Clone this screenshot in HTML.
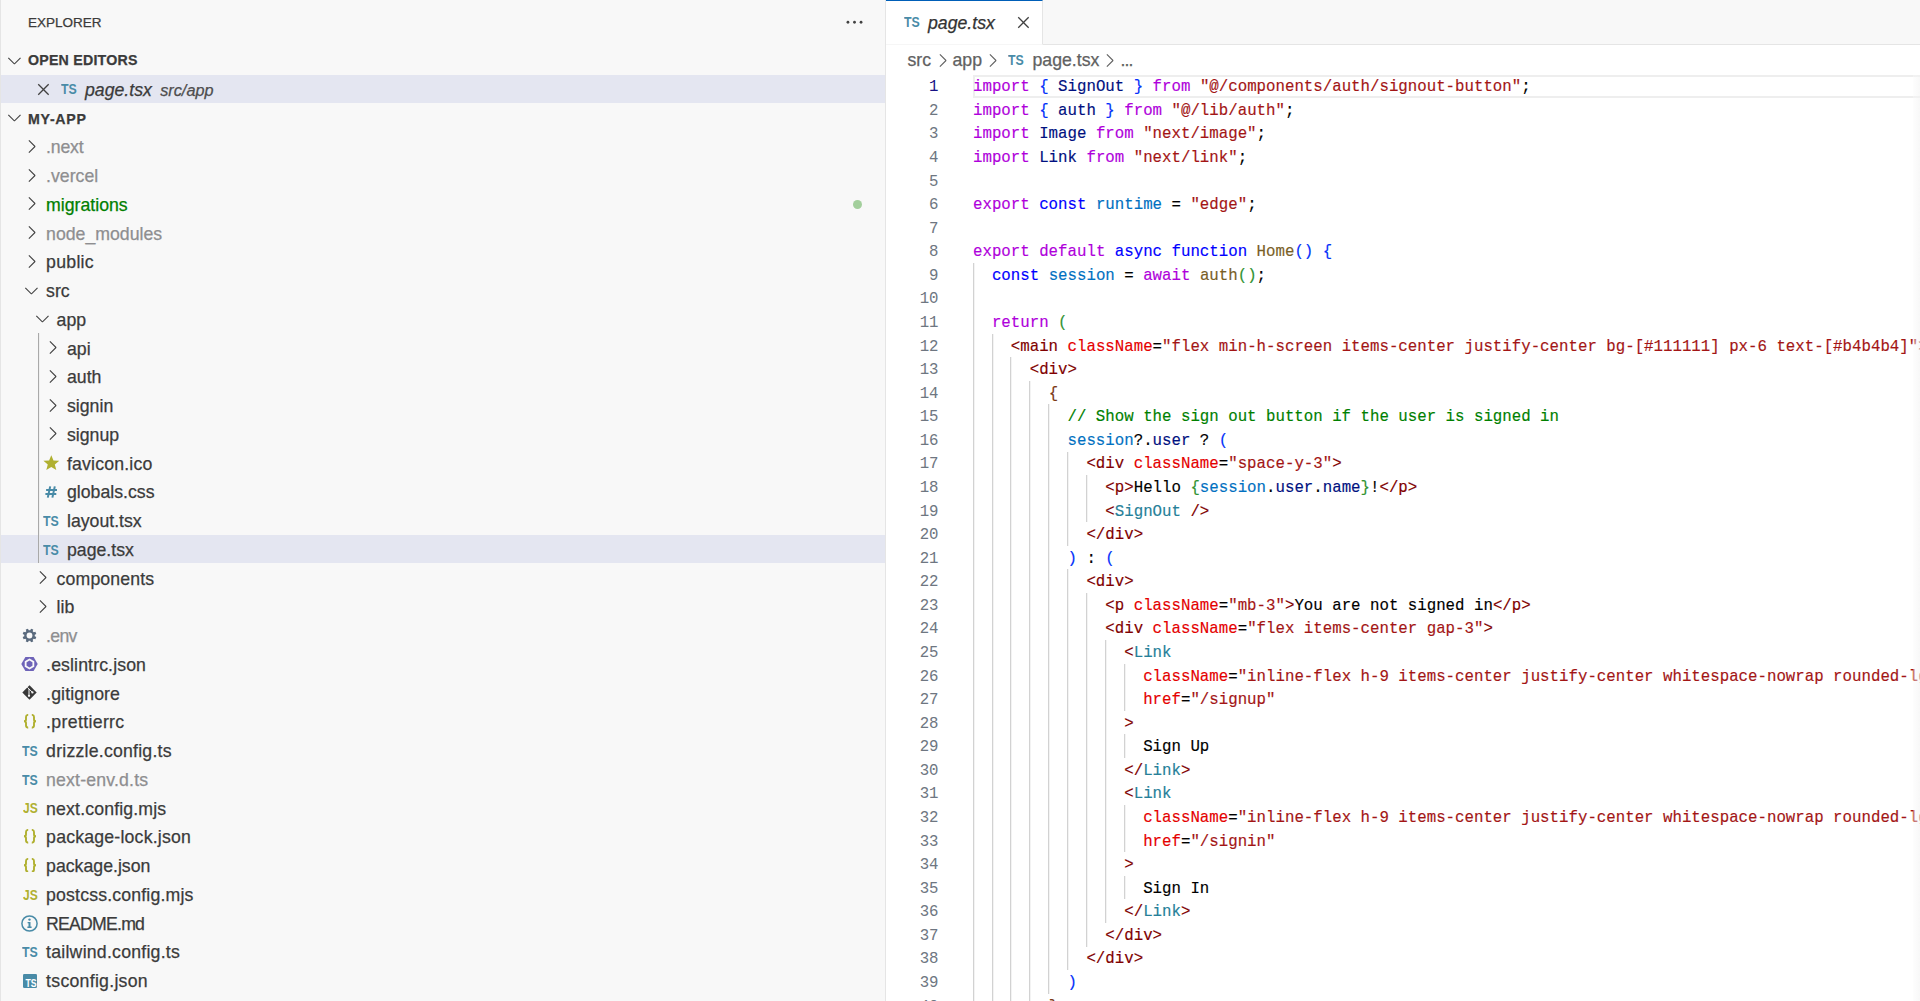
<!DOCTYPE html><html><head><meta charset="utf-8"><title>page.tsx - my-app</title><style>
*{margin:0;padding:0;box-sizing:border-box}
html,body{width:1920px;height:1001px;overflow:hidden;background:#fff}
body{position:relative;font-family:"Liberation Sans",sans-serif;color:#3b3b3b}
.ic{position:absolute;display:block}
.t{position:absolute;white-space:pre;font-size:17.7px;line-height:28.75px;height:28.75px;color:#3b3b3b;-webkit-text-stroke:0.25px currentColor}
.tsic{position:absolute;font-family:"Liberation Sans",sans-serif;font-weight:700;font-size:14px;line-height:20px;color:#498ba7;transform-origin:0 0}
.brac{position:absolute;font-family:"Liberation Sans",sans-serif;font-weight:400;font-size:15px;line-height:24px;color:#b7b73b;letter-spacing:-0.5px}
#side{position:absolute;left:0;top:0;width:886px;height:1001px;background:#f8f8f8;border-left:1px solid #e5e5e5;border-right:1px solid #e5e5e5}
.sel{position:absolute;left:1px;width:884px;height:28.75px;background:#e4e6f1}
.code{position:absolute;left:973px;margin-top:1.8px;font-family:"Liberation Mono",monospace;font-size:15.75px;line-height:23.57px;height:23.57px;white-space:pre;color:#000;-webkit-text-stroke:0.15px currentColor}
.ln{position:absolute;left:890px;margin-top:1.8px;width:48.5px;text-align:right;font-family:"Liberation Mono",monospace;font-size:15.72px;line-height:23.57px;height:23.57px;color:#6e7681;transform:scaleY(1.09);transform-origin:50% 62%}
.g{position:absolute;width:1px;background:#d2d2d2;box-shadow:0.6px 0 0 #ececec}
.k{color:#af00db}.b{color:#0000ff}.v{color:#001080}.s{color:#a31515}.c{color:#0070c1}.f{color:#795e26}
.p1{color:#0431fa}.p2{color:#319331}.p3{color:#7b3814}.tg{color:#800000}.at{color:#e50000}.cm{color:#008000}.cp{color:#267f99}
</style></head><body>
<div id="side"></div>
<div class="t" style="left:28px;top:8.5px;font-size:13.5px;color:#3b3b3b">EXPLORER</div>
<svg class="ic" style="left:843.5px;top:17.3px;width:21px;height:10.5px" viewBox="0 2.5 16 8"><circle cx="3" cy="6.5" r="1.05" fill="#424242"/><circle cx="8" cy="6.5" r="1.05" fill="#424242"/><circle cx="13" cy="6.5" r="1.05" fill="#424242"/></svg>
<svg class="ic" style="left:4.14px;top:49.64px;width:20.91px;height:20.91px" viewBox="0 0 16 16"><path fill="#424242" d="M7.976 10.072l4.357-4.357.62.618L8.284 11h-.618L3 6.333l.619-.618 4.357 4.357z"/></svg>
<div class="t" style="left:28px;top:45.75px;font-size:14.2px;font-weight:700;letter-spacing:0.22px;color:#3b3b3b">OPEN EDITORS</div>
<div class="sel" style="top:74.5px"></div>
<svg class="ic" style="left:32.74px;top:78.54px;width:20.91px;height:20.91px" viewBox="0 0 16 16"><path fill="#424242" d="M8 8.707l3.646 3.647.708-.707L8.707 8l3.647-3.646-.707-.708L8 7.293 4.354 3.646l-.707.708L7.293 8l-3.646 3.646.707.708L8 8.707z"/></svg>
<span class="tsic" style="left:61.00px;top:78.71px;transform:scaleX(0.88)">TS</span>
<div class="t" style="left:85px;top:75.8px;font-style:italic">page.tsx<span style="font-size:16.3px;color:#4e4e4e;margin-left:8.3px">src/app</span></div>
<svg class="ic" style="left:4.14px;top:107.14px;width:20.91px;height:20.91px" viewBox="0 0 16 16"><path fill="#424242" d="M7.976 10.072l4.357-4.357.62.618L8.284 11h-.618L3 6.333l.619-.618 4.357 4.357z"/></svg>
<div class="t" style="left:28px;top:105px;font-size:14.2px;font-weight:700;letter-spacing:0.7px;color:#3b3b3b">MY-APP</div>
<svg class="ic" style="left:21.14px;top:135.92px;width:20.91px;height:20.91px" viewBox="0 0 16 16"><path fill="#424242" d="M10.072 8.024L5.715 3.667l.618-.62L11 7.716v.618L6.333 13l-.618-.619 4.357-4.357z"/></svg>
<div class="t" style="left:46.10px;top:133.30px;letter-spacing:-0.22px;color:#8e8e90">.next</div>
<svg class="ic" style="left:21.14px;top:164.67px;width:20.91px;height:20.91px" viewBox="0 0 16 16"><path fill="#424242" d="M10.072 8.024L5.715 3.667l.618-.62L11 7.716v.618L6.333 13l-.618-.619 4.357-4.357z"/></svg>
<div class="t" style="left:46.10px;top:162.05px;color:#8e8e90">.vercel</div>
<svg class="ic" style="left:21.14px;top:193.42px;width:20.91px;height:20.91px" viewBox="0 0 16 16"><path fill="#424242" d="M10.072 8.024L5.715 3.667l.618-.62L11 7.716v.618L6.333 13l-.618-.619 4.357-4.357z"/></svg>
<div class="t" style="left:46.10px;top:190.80px;color:#007f00">migrations</div>
<div style="position:absolute;left:852.6px;top:199.78px;width:9.4px;height:9.4px;border-radius:50%;background:#a3cf9c"></div>
<svg class="ic" style="left:21.14px;top:222.17px;width:20.91px;height:20.91px" viewBox="0 0 16 16"><path fill="#424242" d="M10.072 8.024L5.715 3.667l.618-.62L11 7.716v.618L6.333 13l-.618-.619 4.357-4.357z"/></svg>
<div class="t" style="left:46.10px;top:219.55px;color:#8e8e90">node_modules</div>
<svg class="ic" style="left:21.14px;top:250.92px;width:20.91px;height:20.91px" viewBox="0 0 16 16"><path fill="#424242" d="M10.072 8.024L5.715 3.667l.618-.62L11 7.716v.618L6.333 13l-.618-.619 4.357-4.357z"/></svg>
<div class="t" style="left:46.10px;top:248.30px;letter-spacing:0.26px">public</div>
<svg class="ic" style="left:21.14px;top:279.67px;width:20.91px;height:20.91px" viewBox="0 0 16 16"><path fill="#424242" d="M7.976 10.072l4.357-4.357.62.618L8.284 11h-.618L3 6.333l.619-.618 4.357 4.357z"/></svg>
<div class="t" style="left:46.10px;top:277.05px">src</div>
<svg class="ic" style="left:31.59px;top:308.42px;width:20.91px;height:20.91px" viewBox="0 0 16 16"><path fill="#424242" d="M7.976 10.072l4.357-4.357.62.618L8.284 11h-.618L3 6.333l.619-.618 4.357 4.357z"/></svg>
<div class="t" style="left:56.55px;top:305.80px">app</div>
<svg class="ic" style="left:42.04px;top:337.17px;width:20.91px;height:20.91px" viewBox="0 0 16 16"><path fill="#424242" d="M10.072 8.024L5.715 3.667l.618-.62L11 7.716v.618L6.333 13l-.618-.619 4.357-4.357z"/></svg>
<div class="t" style="left:67.00px;top:334.55px">api</div>
<svg class="ic" style="left:42.04px;top:365.92px;width:20.91px;height:20.91px" viewBox="0 0 16 16"><path fill="#424242" d="M10.072 8.024L5.715 3.667l.618-.62L11 7.716v.618L6.333 13l-.618-.619 4.357-4.357z"/></svg>
<div class="t" style="left:67.00px;top:363.30px">auth</div>
<svg class="ic" style="left:42.04px;top:394.67px;width:20.91px;height:20.91px" viewBox="0 0 16 16"><path fill="#424242" d="M10.072 8.024L5.715 3.667l.618-.62L11 7.716v.618L6.333 13l-.618-.619 4.357-4.357z"/></svg>
<div class="t" style="left:67.00px;top:392.05px">signin</div>
<svg class="ic" style="left:42.04px;top:423.42px;width:20.91px;height:20.91px" viewBox="0 0 16 16"><path fill="#424242" d="M10.072 8.024L5.715 3.667l.618-.62L11 7.716v.618L6.333 13l-.618-.619 4.357-4.357z"/></svg>
<div class="t" style="left:67.00px;top:420.80px">signup</div>
<svg class="ic" style="left:42.70px;top:455.02px;width:16.6px;height:15.6px" viewBox="0 0 16 15"><path fill="#b0b030" d="M8 0.3 L10.1 5.2 L15.6 5.6 L11.4 9.1 L12.8 14.4 L8 11.5 L3.2 14.4 L4.6 9.1 L0.4 5.6 L5.9 5.2 Z"/></svg>
<div class="t" style="left:67.00px;top:449.55px;letter-spacing:0.17px">favicon.ico</div>
<svg class="ic" style="left:45.40px;top:485.77px;width:12.4px;height:12px" viewBox="0 0 12 12"><path stroke="#498ba7" stroke-width="2.0" fill="none" d="M5.0 0.4 L2.6 11.6 M9.6 0.4 L7.2 11.6 M0.9 3.9 H11.8 M0.2 8.1 H11.1"/></svg>
<div class="t" style="left:67.00px;top:478.30px">globals.css</div>
<span class="tsic" style="left:43.20px;top:510.79px;transform:scaleX(0.88)">TS</span>
<div class="t" style="left:67.00px;top:507.05px">layout.tsx</div>
<div class="sel" style="top:534.50px"></div>
<span class="tsic" style="left:43.20px;top:539.53px;transform:scaleX(0.88)">TS</span>
<div class="t" style="left:67.00px;top:535.80px">page.tsx</div>
<svg class="ic" style="left:31.59px;top:567.17px;width:20.91px;height:20.91px" viewBox="0 0 16 16"><path fill="#424242" d="M10.072 8.024L5.715 3.667l.618-.62L11 7.716v.618L6.333 13l-.618-.619 4.357-4.357z"/></svg>
<div class="t" style="left:56.55px;top:564.55px;letter-spacing:0.14px">components</div>
<svg class="ic" style="left:31.59px;top:595.92px;width:20.91px;height:20.91px" viewBox="0 0 16 16"><path fill="#424242" d="M10.072 8.024L5.715 3.667l.618-.62L11 7.716v.618L6.333 13l-.618-.619 4.357-4.357z"/></svg>
<div class="t" style="left:56.55px;top:593.30px">lib</div>
<svg class="ic" style="left:22.20px;top:628.12px;width:15px;height:15px" viewBox="0 0 15 15"><polygon points="8.28,2.26 9.02,0.67 11.26,1.60 10.65,3.24 11.76,4.35 13.40,3.74 14.33,5.98 12.74,6.72 12.74,8.28 14.33,9.02 13.40,11.26 11.76,10.65 10.65,11.76 11.26,13.40 9.02,14.33 8.28,12.74 6.72,12.74 5.98,14.33 3.74,13.40 4.35,11.76 3.24,10.65 1.60,11.26 0.67,9.02 2.26,8.28 2.26,6.72 0.67,5.98 1.60,3.74 3.24,4.35 4.35,3.24 3.74,1.60 5.98,0.67 6.72,2.26" fill="#5a6a7d"/><circle cx="7.5" cy="7.5" r="2.9" fill="#f8f8f8"/></svg>
<div class="t" style="left:46.10px;top:622.05px;letter-spacing:-0.7px;color:#8e8e90">.env</div>
<svg class="ic" style="left:21.40px;top:655.77px;width:17px;height:16px" viewBox="0 0 17 16"><polygon points="16.70,8.00 12.60,15.10 4.40,15.10 0.30,8.00 4.40,0.90 12.60,0.90" fill="#6e63b8"/><polygon points="8.50,13.50 3.74,10.75 3.74,5.25 8.50,2.50 13.26,5.25 13.26,10.75" fill="#f8f8f8"/><polygon points="8.50,11.40 5.56,9.70 5.56,6.30 8.50,4.60 11.44,6.30 11.44,9.70" fill="#6e63b8"/></svg>
<div class="t" style="left:46.10px;top:650.80px;letter-spacing:0.12px">.eslintrc.json</div>
<svg class="ic" style="left:22.40px;top:685.12px;width:15px;height:15px" viewBox="0 0 15 15"><path fill="#383838" d="M7.5 0.3 L14.7 7.5 L7.5 14.7 L0.3 7.5 Z"/><path stroke="#f8f8f8" stroke-width="1.0" fill="none" d="M5.4 2.3 L10.6 7.5 M7.0 4.0 V10.6"/><circle cx="7.0" cy="10.8" r="1.15" fill="#f8f8f8"/><circle cx="10.4" cy="7.4" r="1.15" fill="#f8f8f8"/></svg>
<div class="t" style="left:46.10px;top:679.55px;letter-spacing:0.12px">.gitignore</div>
<svg class="ic" style="left:22.80px;top:714.08px;width:14px;height:14.6px" viewBox="0 0 14 14.6"><path stroke="#b0b030" stroke-width="1.9" fill="none" d="M5.2 0.9 C3.6 0.9 3.0 1.5 3.0 3.0 V5.6 C3.0 6.7 2.4 7.3 1.0 7.3 C2.4 7.3 3.0 7.9 3.0 9.0 V11.6 C3.0 13.1 3.6 13.7 5.2 13.7"/><path stroke="#b0b030" stroke-width="1.9" fill="none" d="M8.8 0.9 C10.4 0.9 11.0 1.5 11.0 3.0 V5.6 C11.0 6.7 11.6 7.3 13.0 7.3 C11.6 7.3 11.0 7.9 11.0 9.0 V11.6 C11.0 13.1 10.4 13.7 8.8 13.7"/></svg>
<div class="t" style="left:46.10px;top:708.30px;letter-spacing:0.34px">.prettierrc</div>
<span class="tsic" style="left:22.30px;top:740.78px;transform:scaleX(0.88)">TS</span>
<div class="t" style="left:46.10px;top:737.05px;letter-spacing:0.22px">drizzle.config.ts</div>
<span class="tsic" style="left:22.30px;top:769.53px;transform:scaleX(0.88)">TS</span>
<div class="t" style="left:46.10px;top:765.80px;letter-spacing:0.17px;color:#8e8e90">next-env.d.ts</div>
<span class="tsic" style="left:22.90px;top:798.38px;color:#b0b030;transform:scaleX(0.86)">JS</span>
<div class="t" style="left:46.10px;top:794.55px;letter-spacing:0.15px">next.config.mjs</div>
<svg class="ic" style="left:22.80px;top:829.08px;width:14px;height:14.6px" viewBox="0 0 14 14.6"><path stroke="#b0b030" stroke-width="1.9" fill="none" d="M5.2 0.9 C3.6 0.9 3.0 1.5 3.0 3.0 V5.6 C3.0 6.7 2.4 7.3 1.0 7.3 C2.4 7.3 3.0 7.9 3.0 9.0 V11.6 C3.0 13.1 3.6 13.7 5.2 13.7"/><path stroke="#b0b030" stroke-width="1.9" fill="none" d="M8.8 0.9 C10.4 0.9 11.0 1.5 11.0 3.0 V5.6 C11.0 6.7 11.6 7.3 13.0 7.3 C11.6 7.3 11.0 7.9 11.0 9.0 V11.6 C11.0 13.1 10.4 13.7 8.8 13.7"/></svg>
<div class="t" style="left:46.10px;top:823.30px;letter-spacing:0.2px">package-lock.json</div>
<svg class="ic" style="left:22.80px;top:857.83px;width:14px;height:14.6px" viewBox="0 0 14 14.6"><path stroke="#b0b030" stroke-width="1.9" fill="none" d="M5.2 0.9 C3.6 0.9 3.0 1.5 3.0 3.0 V5.6 C3.0 6.7 2.4 7.3 1.0 7.3 C2.4 7.3 3.0 7.9 3.0 9.0 V11.6 C3.0 13.1 3.6 13.7 5.2 13.7"/><path stroke="#b0b030" stroke-width="1.9" fill="none" d="M8.8 0.9 C10.4 0.9 11.0 1.5 11.0 3.0 V5.6 C11.0 6.7 11.6 7.3 13.0 7.3 C11.6 7.3 11.0 7.9 11.0 9.0 V11.6 C11.0 13.1 10.4 13.7 8.8 13.7"/></svg>
<div class="t" style="left:46.10px;top:852.05px">package.json</div>
<span class="tsic" style="left:22.90px;top:884.63px;color:#b0b030;transform:scaleX(0.86)">JS</span>
<div class="t" style="left:46.10px;top:880.80px;letter-spacing:0.16px">postcss.config.mjs</div>
<svg class="ic" style="left:21.30px;top:915.12px;width:17px;height:17px" viewBox="0 0 17 17"><circle cx="8.5" cy="8.5" r="7.6" stroke="#498ba7" stroke-width="1.5" fill="none"/><circle cx="8.5" cy="4.6" r="1.2" fill="#498ba7"/><path fill="#498ba7" d="M6.6 6.9 H9.5 V11.6 H10.6 V12.9 H6.4 V11.6 H7.5 V8.2 H6.6 Z"/></svg>
<div class="t" style="left:46.10px;top:909.55px;letter-spacing:-0.79px">README.md</div>
<span class="tsic" style="left:22.30px;top:942.03px;transform:scaleX(0.88)">TS</span>
<div class="t" style="left:46.10px;top:938.30px;letter-spacing:0.23px">tailwind.config.ts</div>
<div style="position:absolute;left:22.70px;top:973.52px;width:14.3px;height:14.7px;border-radius:1.3px;background:#498ba7;overflow:hidden"><span style="position:absolute;right:0.7px;top:3.2px;font-family:'Liberation Sans';font-weight:700;font-size:10.6px;line-height:12px;color:#fff;transform:scaleX(0.82);transform-origin:100% 0">TS</span></div>
<div class="t" style="left:46.10px;top:967.05px;letter-spacing:0.27px">tsconfig.json</div>
<div class="g" style="left:38.2px;top:333.25px;height:230.00px;background:#a9a9a9"></div>
<div style="position:absolute;left:886px;top:0;width:1034px;height:45.1px;background:#f8f8f8;border-bottom:1px solid #e5e5e5"></div>
<div style="position:absolute;left:886px;top:0;width:157px;height:45.1px;background:#fff;border-top:1.5px solid #005fb8;border-right:1px solid #e5e5e5;border-bottom:1px solid #f6f6f6"></div>
<span class="tsic" style="left:904.00px;top:12.41px;transform:scaleX(0.88)">TS</span>
<div class="t" style="left:928px;top:8.5px;font-style:italic;color:#333">page.tsx</div>
<svg class="ic" style="left:1013.04px;top:12.34px;width:20.91px;height:20.91px" viewBox="0 0 16 16"><path fill="#424242" d="M8 8.707l3.646 3.647.708-.707L8.707 8l3.647-3.646-.707-.708L8 7.293 4.354 3.646l-.707.708L7.293 8l-3.646 3.646.707.708L8 8.707z"/></svg>
<div class="t" style="left:907.5px;top:46.35px;color:#616161">src</div>
<svg class="ic" style="left:931.74px;top:49.74px;width:20.91px;height:20.91px" viewBox="0 0 16 16"><path fill="#616161" d="M10.072 8.024L5.715 3.667l.618-.62L11 7.716v.618L6.333 13l-.618-.619 4.357-4.357z"/></svg>
<div class="t" style="left:952.5px;top:46.35px;color:#616161">app</div>
<svg class="ic" style="left:982.44px;top:49.74px;width:20.91px;height:20.91px" viewBox="0 0 16 16"><path fill="#616161" d="M10.072 8.024L5.715 3.667l.618-.62L11 7.716v.618L6.333 13l-.618-.619 4.357-4.357z"/></svg>
<span class="tsic" style="left:1008.00px;top:50.26px;transform:scaleX(0.88)">TS</span>
<div class="t" style="left:1032.5px;top:46.35px;color:#616161">page.tsx</div>
<svg class="ic" style="left:1099.34px;top:49.74px;width:20.91px;height:20.91px" viewBox="0 0 16 16"><path fill="#616161" d="M10.072 8.024L5.715 3.667l.618-.62L11 7.716v.618L6.333 13l-.618-.619 4.357-4.357z"/></svg>
<div class="t" style="left:1120.5px;top:46.35px;letter-spacing:-0.9px;color:#616161">...</div>
<div style="position:absolute;left:972.5px;top:74.50px;width:948px;height:23.57px;border:2px solid #eeeeee;border-right:none"></div>
<div class="g" style="left:973.00px;top:263.06px;height:737.94px"></div>
<div class="g" style="left:992.00px;top:333.77px;height:667.23px"></div>
<div class="g" style="left:1010.00px;top:357.34px;height:643.66px"></div>
<div class="g" style="left:1029.00px;top:380.91px;height:620.09px"></div>
<div class="g" style="left:1048.00px;top:404.48px;height:589.25px"></div>
<div class="g" style="left:1067.00px;top:451.62px;height:94.28px"></div>
<div class="g" style="left:1067.00px;top:569.47px;height:400.69px"></div>
<div class="g" style="left:1086.00px;top:475.19px;height:47.14px"></div>
<div class="g" style="left:1086.00px;top:593.04px;height:353.55px"></div>
<div class="g" style="left:1105.00px;top:640.18px;height:282.84px"></div>
<div class="g" style="left:1124.00px;top:663.75px;height:47.14px"></div>
<div class="g" style="left:1124.00px;top:734.46px;height:23.57px"></div>
<div class="g" style="left:1124.00px;top:805.17px;height:47.14px"></div>
<div class="g" style="left:1124.00px;top:875.88px;height:23.57px"></div>
<div class="ln" style="top:74.50px;color:#171184">1</div>
<div class="code" style="top:74.50px"><span class="k">import</span> <span class="p1">{</span> <span class="v">SignOut</span> <span class="p1">}</span> <span class="k">from</span> <span class="s">"@/components/auth/signout-button"</span>;</div>
<div class="ln" style="top:98.07px;color:#6e7681">2</div>
<div class="code" style="top:98.07px"><span class="k">import</span> <span class="p1">{</span> <span class="v">auth</span> <span class="p1">}</span> <span class="k">from</span> <span class="s">"@/lib/auth"</span>;</div>
<div class="ln" style="top:121.64px;color:#6e7681">3</div>
<div class="code" style="top:121.64px"><span class="k">import</span> <span class="v">Image</span> <span class="k">from</span> <span class="s">"next/image"</span>;</div>
<div class="ln" style="top:145.21px;color:#6e7681">4</div>
<div class="code" style="top:145.21px"><span class="k">import</span> <span class="v">Link</span> <span class="k">from</span> <span class="s">"next/link"</span>;</div>
<div class="ln" style="top:168.78px;color:#6e7681">5</div>
<div class="ln" style="top:192.35px;color:#6e7681">6</div>
<div class="code" style="top:192.35px"><span class="k">export</span> <span class="b">const</span> <span class="c">runtime</span> = <span class="s">"edge"</span>;</div>
<div class="ln" style="top:215.92px;color:#6e7681">7</div>
<div class="ln" style="top:239.49px;color:#6e7681">8</div>
<div class="code" style="top:239.49px"><span class="k">export</span> <span class="k">default</span> <span class="b">async</span> <span class="b">function</span> <span class="f">Home</span><span class="p1">()</span> <span class="p1">{</span></div>
<div class="ln" style="top:263.06px;color:#6e7681">9</div>
<div class="code" style="top:263.06px">  <span class="b">const</span> <span class="c">session</span> = <span class="k">await</span> <span class="f">auth</span><span class="p2">()</span>;</div>
<div class="ln" style="top:286.63px;color:#6e7681">10</div>
<div class="ln" style="top:310.20px;color:#6e7681">11</div>
<div class="code" style="top:310.20px">  <span class="k">return</span> <span class="p2">(</span></div>
<div class="ln" style="top:333.77px;color:#6e7681">12</div>
<div class="code" style="top:333.77px">    <span class="tg">&lt;main</span> <span class="at">className</span>=<span class="s">"flex min-h-screen items-center justify-center bg-[#111111] px-6 text-[#b4b4b4]"</span><span class="tg">&gt;</span></div>
<div class="ln" style="top:357.34px;color:#6e7681">13</div>
<div class="code" style="top:357.34px">      <span class="tg">&lt;div&gt;</span></div>
<div class="ln" style="top:380.91px;color:#6e7681">14</div>
<div class="code" style="top:380.91px">        <span class="p3">{</span></div>
<div class="ln" style="top:404.48px;color:#6e7681">15</div>
<div class="code" style="top:404.48px">          <span class="cm">// Show the sign out button if the user is signed in</span></div>
<div class="ln" style="top:428.05px;color:#6e7681">16</div>
<div class="code" style="top:428.05px">          <span class="c">session</span>?.<span class="v">user</span> ? <span class="p1">(</span></div>
<div class="ln" style="top:451.62px;color:#6e7681">17</div>
<div class="code" style="top:451.62px">            <span class="tg">&lt;div</span> <span class="at">className</span>=<span class="s">"space-y-3"</span><span class="tg">&gt;</span></div>
<div class="ln" style="top:475.19px;color:#6e7681">18</div>
<div class="code" style="top:475.19px">              <span class="tg">&lt;p&gt;</span>Hello <span class="p2">{</span><span class="c">session</span>.<span class="v">user</span>.<span class="v">name</span><span class="p2">}</span>!<span class="tg">&lt;/p&gt;</span></div>
<div class="ln" style="top:498.76px;color:#6e7681">19</div>
<div class="code" style="top:498.76px">              <span class="tg">&lt;</span><span class="cp">SignOut</span> <span class="tg">/&gt;</span></div>
<div class="ln" style="top:522.33px;color:#6e7681">20</div>
<div class="code" style="top:522.33px">            <span class="tg">&lt;/div&gt;</span></div>
<div class="ln" style="top:545.90px;color:#6e7681">21</div>
<div class="code" style="top:545.90px">          <span class="p1">)</span> : <span class="p1">(</span></div>
<div class="ln" style="top:569.47px;color:#6e7681">22</div>
<div class="code" style="top:569.47px">            <span class="tg">&lt;div&gt;</span></div>
<div class="ln" style="top:593.04px;color:#6e7681">23</div>
<div class="code" style="top:593.04px">              <span class="tg">&lt;p</span> <span class="at">className</span>=<span class="s">"mb-3"</span><span class="tg">&gt;</span>You are not signed in<span class="tg">&lt;/p&gt;</span></div>
<div class="ln" style="top:616.61px;color:#6e7681">24</div>
<div class="code" style="top:616.61px">              <span class="tg">&lt;div</span> <span class="at">className</span>=<span class="s">"flex items-center gap-3"</span><span class="tg">&gt;</span></div>
<div class="ln" style="top:640.18px;color:#6e7681">25</div>
<div class="code" style="top:640.18px">                <span class="tg">&lt;</span><span class="cp">Link</span></div>
<div class="ln" style="top:663.75px;color:#6e7681">26</div>
<div class="code" style="top:663.75px">                  <span class="at">className</span>=<span class="s">"inline-flex h-9 items-center justify-center whitespace-nowrap rounded-lg bg-neutral-800"</span></div>
<div class="ln" style="top:687.32px;color:#6e7681">27</div>
<div class="code" style="top:687.32px">                  <span class="at">href</span>=<span class="s">"/signup"</span></div>
<div class="ln" style="top:710.89px;color:#6e7681">28</div>
<div class="code" style="top:710.89px">                <span class="tg">&gt;</span></div>
<div class="ln" style="top:734.46px;color:#6e7681">29</div>
<div class="code" style="top:734.46px">                  Sign Up</div>
<div class="ln" style="top:758.03px;color:#6e7681">30</div>
<div class="code" style="top:758.03px">                <span class="tg">&lt;/</span><span class="cp">Link</span><span class="tg">&gt;</span></div>
<div class="ln" style="top:781.60px;color:#6e7681">31</div>
<div class="code" style="top:781.60px">                <span class="tg">&lt;</span><span class="cp">Link</span></div>
<div class="ln" style="top:805.17px;color:#6e7681">32</div>
<div class="code" style="top:805.17px">                  <span class="at">className</span>=<span class="s">"inline-flex h-9 items-center justify-center whitespace-nowrap rounded-lg bg-neutral-800"</span></div>
<div class="ln" style="top:828.74px;color:#6e7681">33</div>
<div class="code" style="top:828.74px">                  <span class="at">href</span>=<span class="s">"/signin"</span></div>
<div class="ln" style="top:852.31px;color:#6e7681">34</div>
<div class="code" style="top:852.31px">                <span class="tg">&gt;</span></div>
<div class="ln" style="top:875.88px;color:#6e7681">35</div>
<div class="code" style="top:875.88px">                  Sign In</div>
<div class="ln" style="top:899.45px;color:#6e7681">36</div>
<div class="code" style="top:899.45px">                <span class="tg">&lt;/</span><span class="cp">Link</span><span class="tg">&gt;</span></div>
<div class="ln" style="top:923.02px;color:#6e7681">37</div>
<div class="code" style="top:923.02px">              <span class="tg">&lt;/div&gt;</span></div>
<div class="ln" style="top:946.59px;color:#6e7681">38</div>
<div class="code" style="top:946.59px">            <span class="tg">&lt;/div&gt;</span></div>
<div class="ln" style="top:970.16px;color:#6e7681">39</div>
<div class="code" style="top:970.16px">          <span class="p1">)</span></div>
<div class="ln" style="top:993.73px;color:#6e7681">40</div>
<div class="code" style="top:993.73px">        <span class="p3">}</span></div>
<div style="position:absolute;left:1913px;top:74.5px;width:7px;height:927px;background:linear-gradient(to right,rgba(250,250,250,.35),rgba(243,243,243,.6))"></div>
</body></html>
